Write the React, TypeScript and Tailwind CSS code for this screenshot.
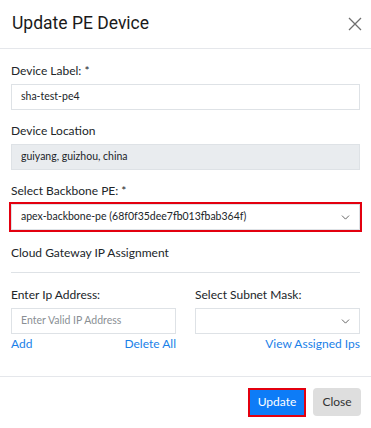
import { ChevronDown } from "lucide-react";

function Label({ children }: { children: React.ReactNode }) {
  return <div className="text-[12px] leading-[18px] text-[#212529] mb-[4px]">{children}</div>;
}

function SelectBox({ value, outlined }: { value?: string; outlined?: boolean }) {
  return (
    <div
      className={
        "h-[26px] flex items-center justify-between border border-[#dee2e6] bg-white pl-[9px] pr-[7px] " +
        (outlined ? "outline-2 outline-[#e3000f]" : "")
      }
    >
      <span className="text-[10.5px] text-[#212529]">{value}</span>
      <ChevronDown size={13} strokeWidth={1.5} className="text-[#444]" />
    </div>
  );
}

export default function App() {
  return (
    <div className="w-[371px] h-[428px] bg-white text-[#212529]" style={{ fontFamily: "Lato, 'Open Sans', sans-serif" }}>
      <div className="h-[49px] flex items-center justify-between pl-[12px] pr-[9px] border-b border-[#e5e7eb]">
        <h2 className="text-[17.5px] font-normal leading-none text-[#1a1a1a] font-[Roboto,sans-serif]">Update PE Device</h2>
        <svg width="14" height="14" viewBox="0 0 14 14" className="text-[#6f6f6f]">
          <path d="M1 1 L13 13 M13 1 L1 13" stroke="currentColor" strokeWidth="1.3" fill="none" />
        </svg>
      </div>

      <div className="px-[11px] pt-[13px]">
        <Label>Device Label: *</Label>
        <div className="h-[26px] flex items-center border border-[#dee2e6] px-[9px] text-[10.5px]">sha-test-pe4</div>

        <div className="mt-[12px]">
          <Label>Device Location</Label>
          <div className="h-[26px] flex items-center border border-[#dee2e6] bg-[#e9ecef] px-[9px] text-[10.5px]">
            guiyang, guizhou, china
          </div>
        </div>

        <div className="mt-[12px]">
          <Label>Select Backbone PE: *</Label>
          <SelectBox value="apex-backbone-pe (68f0f35dee7fb013fbab364f)" outlined />
        </div>

        <div className="mt-[14px] text-[12px] leading-[18px] pb-[10px] border-b border-[#dee2e6]">
          Cloud Gateway IP Assignment
        </div>

        <div className="mt-[13px] grid grid-cols-2 gap-x-[19px]">
          <div>
            <Label>Enter Ip Address:</Label>
            <div className="h-[26px] flex items-center border border-[#dee2e6] px-[9px] text-[10.5px] text-[#8a8f94]">
              Enter Valid IP Address
            </div>
            <div className="flex justify-between text-[12px] leading-[20px] text-[#1a7fe8]">
              <span>Add</span>
              <span>Delete All</span>
            </div>
          </div>
          <div>
            <Label>Select Subnet Mask:</Label>
            <SelectBox />
            <div className="flex justify-end text-[12px] leading-[20px] text-[#1a7fe8]">
              <span>View Assigned Ips</span>
            </div>
          </div>
        </div>
      </div>

      <div className="mt-[22px] border-t border-[#e5e7eb] flex justify-end items-center gap-[9px] pt-[11px] pr-[10px]">
        <button className="h-[25px] w-[54px] bg-[#0d7cf7] text-white text-[12px] outline-2 outline-[#e3000f]">
          Update
        </button>
        <button className="h-[28px] w-[48px] bg-[#dedede] text-[#333] text-[12px] rounded-[4px]">Close</button>
      </div>
    </div>
  );
}
